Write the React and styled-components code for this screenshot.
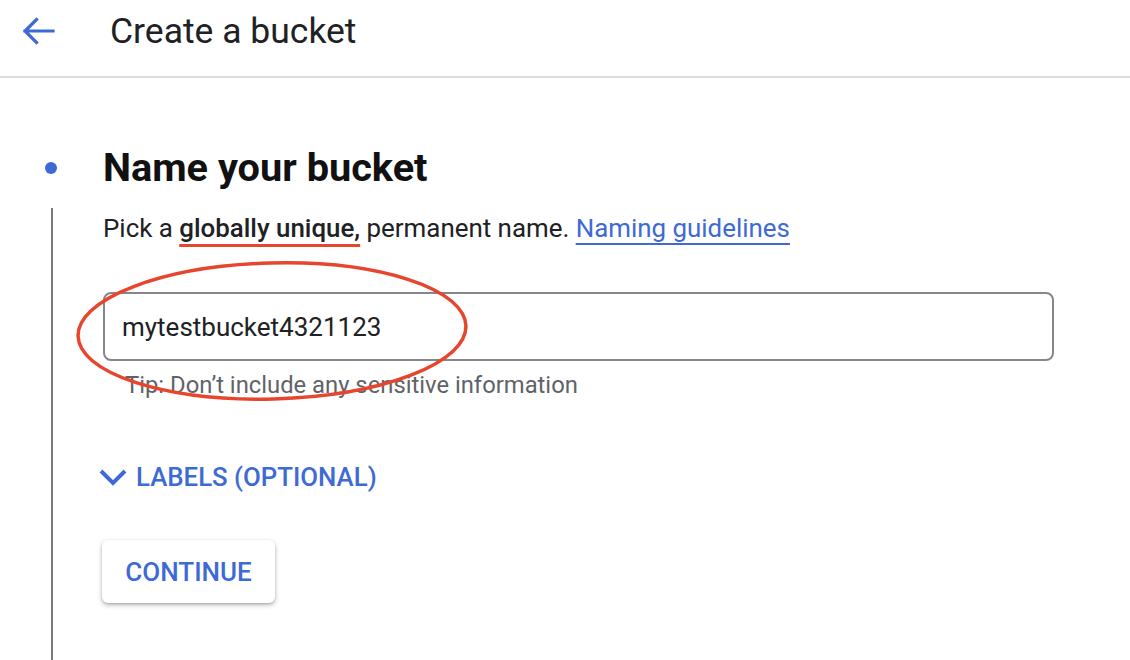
import React from 'react'
import styled, { createGlobalStyle } from 'styled-components';

const blue = '#3d6ad4';
const red = '#e8452f';

const GlobalStyle = createGlobalStyle`
    html, body {
        margin: 0;
        padding: 0;
        background: #fff;
        overflow: hidden;
    }
    body {
        font-family: Roboto, "Noto Sans", Arial, sans-serif;
        color: #202124;
    }
`;

function App() {
  return (
    <Page>
        <GlobalStyle />
        <Header>
            <BackButton aria-label="Back">
                <svg width="34" height="30" viewBox="0 0 34 30" fill="none">
                    <path d="M32 15H4M15.5 3.5L4 15l11.5 11.5" stroke={blue} strokeWidth="3.2" strokeLinecap="square" />
                </svg>
            </BackButton>
            <PageTitle>Create a bucket</PageTitle>
        </Header>
        <Step>
            <DotCell><Dot /></DotCell>
            <StepTitle>Name your bucket</StepTitle>
            <RailCell><Rail /></RailCell>
            <StepBody>
                <Intro>
                    Pick a <Marked>globally unique,</Marked> permanent name. <GuideLink href="#">Naming guidelines</GuideLink>
                </Intro>
                <FieldWrap>
                    <NameInput defaultValue="mytestbucket4321123" />
                    <Circle width="400" height="146" viewBox="0 0 400 146">
                        <ellipse cx="200" cy="73" rx="194" ry="68" fill="none" stroke={red} strokeWidth="3.5" transform="rotate(-1.5 200 73)" />
                    </Circle>
                </FieldWrap>
                <Hint>Tip: Don’t include any sensitive information</Hint>
                <LabelsToggle>
                    <svg width="28" height="18" viewBox="0 0 28 18" fill="none">
                        <path d="M2 3l12 12L26 3" stroke={blue} strokeWidth="4" />
                    </svg>
                    LABELS (OPTIONAL)
                </LabelsToggle>
                <ContinueBtn>CONTINUE</ContinueBtn>
            </StepBody>
        </Step>
    </Page>
  )
}

const Page = styled.div`
    width: 1130px;
    height: 660px;
    overflow: hidden;
`;
const Header = styled.div`
    height: 78px;
    display: flex;
    align-items: center;
    padding-left: 21px;
    border-bottom: 2px solid #dadce0;
    box-sizing: border-box;
`;
const BackButton = styled.div`
    display: flex;
    width: 34px;
    height: 30px;
    margin-top: -15px;
`;
const PageTitle = styled.h1`
    margin: -14px 0 0 55px;
    font-size: 35.5px;
    font-weight: 400;
    line-height: 40px;
    color: #202124;
`;
const Step = styled.div`
    display: grid;
    grid-template-columns: 103px 1fr;
    grid-template-rows: auto 1fr;
    margin-top: 66px;
    min-height: 560px;
`;
const DotCell = styled.div`
    display: flex;
    align-items: center;
    padding-left: 45px;
`;
const Dot = styled.div`
    width: 12px;
    height: 12px;
    border-radius: 50%;
    background: ${blue};
`;
const StepTitle = styled.h2`
    margin: 0;
    font-size: 39.7px;
    font-weight: 700;
    line-height: 48px;
    color: #111;
`;
const RailCell = styled.div`
    padding-left: 51px;
    padding-top: 16px;
`;
const Rail = styled.div`
    width: 2px;
    height: 100%;
    background: #7a7a7a;
`;
const StepBody = styled.div`
    padding-top: 20px;
    display: flex;
    flex-direction: column;
    align-items: flex-start;
`;
const Intro = styled.p`
    margin: 0;
    font-size: 25.9px;
    line-height: 32px;
    color: #202124;
`;
const Marked = styled.b`
    font-weight: 500;
    text-decoration: underline;
    text-decoration-color: ${red};
    text-decoration-thickness: 3px;
    text-underline-offset: 7px;
    text-decoration-skip-ink: none;
`;
const GuideLink = styled.a`
    color: ${blue};
    text-decoration: underline;
    text-decoration-thickness: 2px;
    text-underline-offset: 6px;
    text-decoration-skip-ink: none;
`;
const FieldWrap = styled.div`
    position: relative;
    margin-top: 48px;
`;
const NameInput = styled.input`
    display: block;
    box-sizing: border-box;
    width: 951px;
    height: 69px;
    border: 2px solid #85878b;
    border-radius: 8px;
    padding: 0 17px;
    font-family: Roboto, Arial, sans-serif;
    font-size: 26px;
    color: #202124;
    outline: none;
    background: transparent;
`;
const Circle = styled.svg`
    position: absolute;
    left: -31px;
    top: -34px;
    pointer-events: none;
`;
const Hint = styled.div`
    margin: 10px 0 0 22px;
    font-size: 23.8px;
    line-height: 28px;
    color: #5f6368;
`;
const LabelsToggle = styled.div`
    display: flex;
    align-items: center;
    gap: 9px;
    margin-top: 62px;
    margin-left: -4px;
    font-size: 25.8px;
    font-weight: 500;
    line-height: 32px;
    color: ${blue};
    cursor: pointer;
`;
const ContinueBtn = styled.button`
    margin-top: 47px;
    margin-left: -1px;
    width: 173px;
    height: 63px;
    border: none;
    border-radius: 6px;
    background: #fff;
    box-shadow: 0 2px 5px rgba(0, 0, 0, 0.28), 0 1px 2px rgba(0, 0, 0, 0.12);
    font-family: Roboto, Arial, sans-serif;
    font-size: 26px;
    font-weight: 500;
    color: ${blue};
    cursor: pointer;
`;

export default App
